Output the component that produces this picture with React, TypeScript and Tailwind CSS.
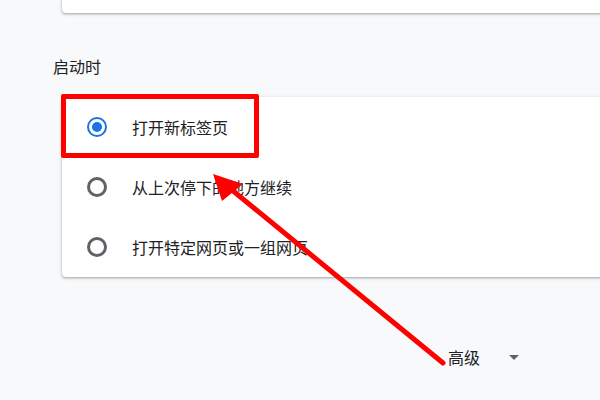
const options = ['打开新标签页', '从上次停下的地方继续', '打开特定网页或一组网页']

function Radio({ checked }: { checked: boolean }) {
  if (checked) {
    return (
      <span className="flex h-[20px] w-[20px] shrink-0 items-center justify-center rounded-full border-[2.5px] border-[#1a73e8]">
        <span className="h-[10px] w-[10px] rounded-full bg-[#1a73e8]" />
      </span>
    )
  }
  return <span className="h-[20px] w-[20px] shrink-0 rounded-full border-[3px] border-[#5f6368]" />
}

export default function App() {
  return (
    <div
      className="relative h-[400px] w-[600px] overflow-hidden bg-[#f8f9fa] text-[#202124]"
      style={{ fontFamily: '"Noto Sans CJK SC", "Noto Sans", sans-serif' }}>
      {/* previous section card, cut off at top */}
      <div className="ml-[62px] h-[13px] w-[700px] rounded-b-[4px] bg-white shadow-[0_1px_2px_rgba(60,64,67,0.3),0_1px_3px_1px_rgba(60,64,67,0.15)]" />

      <div className="ml-[53px] mt-[41px] text-[16px] leading-[24px]">启动时</div>

      {/* startup options */}
      <div className="ml-[62px] mt-[19px] w-[700px] rounded-[4px] bg-white shadow-[0_1px_2px_rgba(60,64,67,0.3),0_1px_3px_1px_rgba(60,64,67,0.15)]">
        {options.map((o, i) => (
          <div key={o} className="flex h-[60px] items-center pl-[25px]">
            <Radio checked={i === 0} />
            <span className="ml-[25px] text-[16px] leading-[24px]">{o}</span>
          </div>
        ))}
      </div>

      <div className="ml-[448px] mt-[68px] flex items-center">
        <span className="text-[16px] leading-[24px]">高级</span>
        <span className="ml-[29px] h-0 w-0 border-x-[5px] border-t-[5px] border-x-transparent border-t-[#5f6368]" />
      </div>

      {/* annotation: red box */}
      <div className="absolute left-[61px] top-[94px] h-[64px] w-[198px] rounded-[2px] border-[5px] border-[#ff0000]" />

      {/* annotation: red arrow */}
      <svg className="absolute left-0 top-0" width="600" height="400" viewBox="0 0 600 400">
        <line x1="443" y1="363" x2="232" y2="190" stroke="#ff0000" strokeWidth="5" strokeLinecap="round" />
        <polygon points="213,174 222,201 243,184" fill="#ff0000" />
      </svg>
    </div>
  )
}
